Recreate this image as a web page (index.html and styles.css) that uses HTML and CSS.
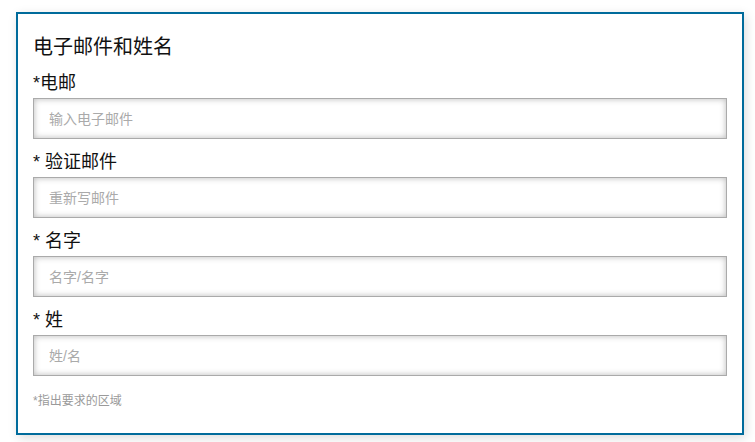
FILE: index.html
```html
<!DOCTYPE html>
<html>
<head>
    <meta charset="utf-8">
    <title>电子邮件和姓名</title>
    <link rel="stylesheet" href="styles.css">
</head>
<body>

    <div class="panel">
        <h3 class="panel-title">电子邮件和姓名</h3>

        <div class="field">
            <label class="field-label" for="email">*电邮</label>
            <input class="field-input" type="text" id="email" placeholder="输入电子邮件">
        </div>

        <div class="field">
            <label class="field-label" for="email2">* 验证邮件</label>
            <input class="field-input" type="text" id="email2" placeholder="重新写邮件">
        </div>

        <div class="field">
            <label class="field-label" for="firstName">* 名字</label>
            <input class="field-input" type="text" id="firstName" placeholder="名字/名字">
        </div>

        <div class="field">
            <label class="field-label" for="lastName">* 姓</label>
            <input class="field-input" type="text" id="lastName" placeholder="姓/名">
        </div>

        <p class="note">*指出要求的区域</p>
    </div>

</body>
</html>
```

FILE: styles.css
```css
body {
    font-family: "Liberation Sans", "Noto Sans CJK SC", sans-serif;
    background-color: #fff;
    margin: 0;
    padding: 12px 11px 7px 16px;
}

.panel {
    border: 2px solid #006b9b;
    background-color: #fff;
    padding: 21px 15px 24px;
    box-shadow: 2px 3px 10px rgba(0, 0, 0, 0.14);
}

.panel-title {
    font-size: 20px;
    font-weight: normal;
    line-height: 24px;
    color: #111;
    margin: 0 0 14px;
}

.field {
    margin-bottom: 13px;
}

.field-label {
    display: block;
    font-size: 18px;
    line-height: 21px;
    color: #111;
    margin-bottom: 4px;
}

.field-input {
    display: block;
    width: 100%;
    height: 41px;
    box-sizing: border-box;
    border: 1px solid #aaa;
    box-shadow: inset 0 0 6px rgba(0, 0, 0, 0.28);
    padding: 0 15px;
    font-family: inherit;
    font-size: 14px;
    color: #333;
    outline: none;
}

.field-input::placeholder {
    color: #aaa;
}

/* margin collapses with the last field's 13px */
.note {
    font-size: 12px;
    line-height: 16px;
    color: #9a9a9a;
    margin: 17px 0 0;
}
```
